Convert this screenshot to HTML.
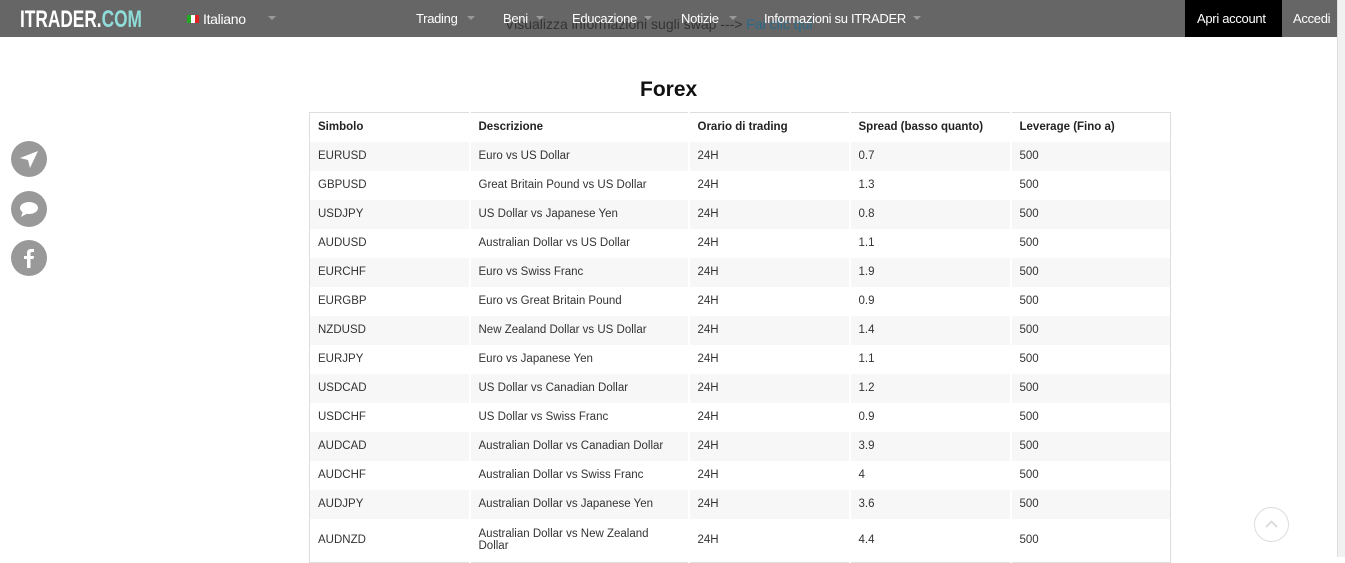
<!DOCTYPE html>
<html><head><meta charset="utf-8"><style>
*{margin:0;padding:0;box-sizing:border-box}
body{width:1345px;height:557px;overflow:hidden;background:#fff;font-family:"Liberation Sans",sans-serif;position:relative}
.nav{position:absolute;left:0;top:0;width:1337px;height:37px;background:#666}
.logo{position:absolute;left:20px;top:6px;font:bold 24px "Liberation Sans",sans-serif;color:#fff;white-space:nowrap;display:inline-block;transform:scaleX(.72);transform-origin:left top}
.logo span{color:#8fdcd8}
.t{position:absolute;top:11px;font-size:13px;color:#fff;letter-spacing:-.3px}
.ar{position:absolute;top:16px;width:0;height:0;border-left:4px solid transparent;border-right:4px solid transparent;border-top:4px solid #999}
.swap{position:absolute;left:505px;top:16px;font-size:14px;color:#333;z-index:1}
.swap span{color:#2a6a8a}
.apri{position:absolute;left:1185px;top:0;width:97px;height:37px;background:#000}
.scroll{position:absolute;left:1337px;top:0;width:8px;height:557px;background:#f1f1f1;border-left:1px solid #ddd}
h2{position:absolute;left:640px;top:78px;font-size:21px;font-weight:bold;color:#111}
table{position:absolute;left:309px;top:112px;width:862px;border-collapse:collapse;border:1px solid #ddd;font-size:11.5px;color:#333}
td,th{height:29px;padding:0 8px;text-align:left;vertical-align:middle;border-right:2px solid #fff}
td:last-child,th:last-child{border-right:1px solid #ddd}
th{font-weight:bold;color:#222;border-right-color:transparent}
tr.g td{background:#f7f7f7}
.soc{position:absolute;left:11px;width:36px;height:36px;border-radius:50%;background:#999}
.up{position:absolute;left:1254px;top:507px;width:35px;height:35px;border:1px solid #ddd;border-radius:50%}
</style></head><body>
<div class="nav"></div>
<div class="apri"></div>
<div class="logo" style="z-index:2">ITRADER.<span>COM</span></div>
<div style="position:absolute;left:187px;top:15px;width:12px;height:8px;z-index:2;display:flex"><i style="flex:1;background:#2a2"></i><i style="flex:1;background:#fff"></i><i style="flex:1;background:#d22"></i></div>
<div class="t" style="left:203px;font-size:14px;z-index:2">Italiano</div>
<div class="ar" style="left:268px"></div>
<div class="swap">Visualizza informazioni sugli swap ---&gt; <span>Fai clic qui</span></div>
<div class="t" style="left:416px;z-index:2">Trading</div><div class="ar" style="left:467px;z-index:2"></div>
<div class="t" style="left:503px;z-index:2">Beni</div><div class="ar" style="left:536px;z-index:2"></div>
<div class="t" style="left:572px;z-index:2">Educazione</div><div class="ar" style="left:644px;z-index:2"></div>
<div class="t" style="left:681px;z-index:2">Notizie</div><div class="ar" style="left:729px;z-index:2"></div>
<div class="t" style="left:764px;z-index:2">Informazioni su ITRADER</div><div class="ar" style="left:913px;z-index:2"></div>
<div class="t" style="left:1197px;z-index:2">Apri account</div>
<div class="t" style="left:1293px;z-index:2">Accedi</div>
<div class="scroll"></div>
<h2>Forex</h2>
<div class="soc" style="top:141px"><svg width="36" height="36" viewBox="0 0 36 36"><path d="M9 17 L27 10 L19 27 L17 19 Z" fill="#fff"/></svg></div>
<div class="soc" style="top:191px"><svg width="36" height="36" viewBox="0 0 36 36"><ellipse cx="18" cy="17" rx="9" ry="6" fill="#fff"/><path d="M12 20 L10 26 L17 22Z" fill="#fff"/></svg></div>
<div class="soc" style="top:240px"><svg width="36" height="36" viewBox="0 0 36 36"><path d="M16 28 V19 H13 V16 H16 V13 C16 10 18 9 20 9 H23 V12 H21 C20 12 19.5 12.5 19.5 13.5 V16 H23 L22.5 19 H19.5 V28 Z" fill="#fff"/></svg></div>
<table>
<tr><th style="width:160px">Simbolo</th><th style="width:219px">Descrizione</th><th style="width:161px">Orario di trading</th><th style="width:161px">Spread (basso quanto)</th><th>Leverage (Fino a)</th></tr>
<tr class="g"><td>EURUSD</td><td>Euro vs US Dollar</td><td>24H</td><td>0.7</td><td>500</td></tr>
<tr><td>GBPUSD</td><td>Great Britain Pound vs US Dollar</td><td>24H</td><td>1.3</td><td>500</td></tr>
<tr class="g"><td>USDJPY</td><td>US Dollar vs Japanese Yen</td><td>24H</td><td>0.8</td><td>500</td></tr>
<tr><td>AUDUSD</td><td>Australian Dollar vs US Dollar</td><td>24H</td><td>1.1</td><td>500</td></tr>
<tr class="g"><td>EURCHF</td><td>Euro vs Swiss Franc</td><td>24H</td><td>1.9</td><td>500</td></tr>
<tr><td>EURGBP</td><td>Euro vs Great Britain Pound</td><td>24H</td><td>0.9</td><td>500</td></tr>
<tr class="g"><td>NZDUSD</td><td>New Zealand Dollar vs US Dollar</td><td>24H</td><td>1.4</td><td>500</td></tr>
<tr><td>EURJPY</td><td>Euro vs Japanese Yen</td><td>24H</td><td>1.1</td><td>500</td></tr>
<tr class="g"><td>USDCAD</td><td>US Dollar vs Canadian Dollar</td><td>24H</td><td>1.2</td><td>500</td></tr>
<tr><td>USDCHF</td><td>US Dollar vs Swiss Franc</td><td>24H</td><td>0.9</td><td>500</td></tr>
<tr class="g"><td>AUDCAD</td><td>Australian Dollar vs Canadian Dollar</td><td>24H</td><td>3.9</td><td>500</td></tr>
<tr><td>AUDCHF</td><td>Australian Dollar vs Swiss Franc</td><td>24H</td><td>4</td><td>500</td></tr>
<tr class="g"><td>AUDJPY</td><td>Australian Dollar vs Japanese Yen</td><td>24H</td><td>3.6</td><td>500</td></tr>
<tr><td style="height:44px">AUDNZD</td><td>Australian Dollar vs New Zealand<br>Dollar</td><td>24H</td><td>4.4</td><td>500</td></tr>
</table>
<div class="up"><svg width="33" height="33" viewBox="0 0 33 33"><path d="M11 19 L16.5 13.5 L22 19" stroke="#ddd" stroke-width="2" fill="none"/></svg></div>
</body></html>
